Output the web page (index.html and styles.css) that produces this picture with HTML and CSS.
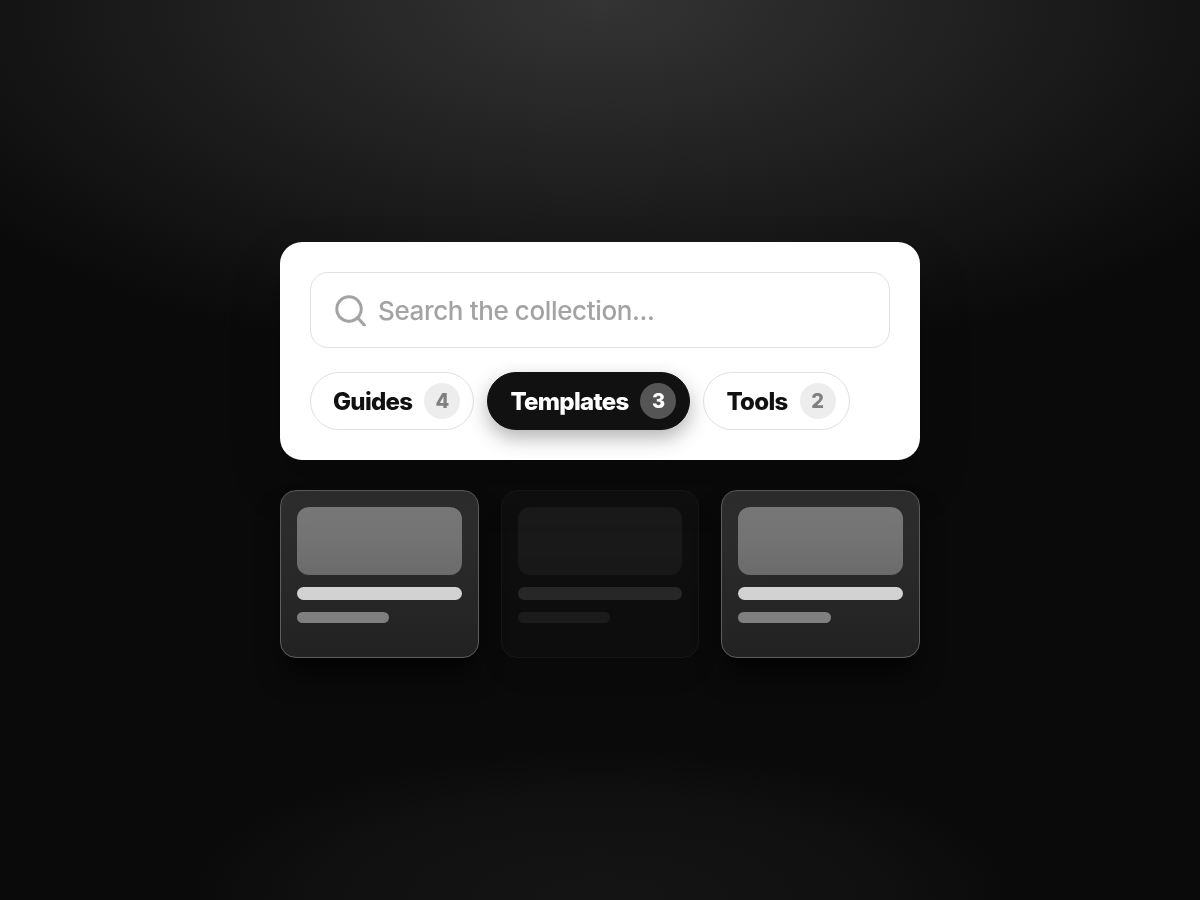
FILE: index.html
```html
<!DOCTYPE html>
<html lang="en">
<head>
<meta charset="utf-8">
<title>Search the collection</title>
<link rel="stylesheet" href="styles.css">
</head>
<body>
<main class="stack">
  <section class="panel">
    <div class="search">
      <svg class="search-icon" viewBox="0 0 32 32" fill="none" stroke="#a3a3a3" stroke-width="3" stroke-linecap="round"><circle cx="15" cy="15" r="12.2"/><path d="M23.5 23.5l7.5 8.5"/></svg>
      <span class="placeholder">Search the collection...</span>
    </div>
    <div class="chips">
      <div class="chip"><span>Guides</span><span class="badge">4</span></div>
      <div class="chip chip-active"><span>Templates</span><span class="badge">3</span></div>
      <div class="chip"><span>Tools</span><span class="badge">2</span></div>
    </div>
  </section>
  <section class="cards">
    <article class="card"><div class="thumb"></div><div class="line"></div><div class="line-short"></div></article>
    <article class="card card-dim"><div class="thumb"></div><div class="line"></div><div class="line-short"></div></article>
    <article class="card"><div class="thumb"></div><div class="line"></div><div class="line-short"></div></article>
  </section>
</main>
</body>
</html>
```
FILE: styles.css
```css
* { box-sizing: border-box; }
html, body { height: 100%; }
body {
  margin: 0;
  display: flex;
  align-items: center;
  justify-content: center;
  background:
    radial-gradient(ellipse 780px 370px at 50% 0, #343434 0%, rgba(10, 10, 10, 0) 100%),
    radial-gradient(ellipse 410px 150px at 50% 100%, #141414 0%, #101010 70%, rgba(10, 10, 10, 0) 100%),
    #0a0a0a;
  font-family: Inter, "Liberation Sans", sans-serif;
  overflow: hidden;
}
.stack { width: 640px; display: flex; flex-direction: column; gap: 30px; }
.panel {
  background: #fff;
  border-radius: 22px;
  padding: 30px;
  display: flex;
  flex-direction: column;
  gap: 24px;
  box-shadow: 0 24px 50px rgba(0, 0, 0, .22);
  will-change: transform;
}
.search {
  height: 76px;
  border: 1px solid #e0e0e0;
  border-radius: 18px;
  display: flex;
  align-items: center;
  gap: 12px;
  padding: 0 23px;
}
.search-icon { width: 32px; height: 32px; flex: none; }
.placeholder { font-size: 26px; font-weight: 500; color: #a3a3a3; letter-spacing: -.37px; }
.chips { display: flex; gap: 13px; }
.chip {
  height: 58px;
  border: 1px solid #e0e0e0;
  border-radius: 29px;
  padding: 0 13px 0 22px;
  display: flex;
  align-items: center;
  gap: 12px;
  font-size: 24px;
  font-weight: 800;
  letter-spacing: -.7px;
  color: #111;
}
.badge {
  width: 36px;
  height: 36px;
  border-radius: 50%;
  background: #ededed;
  color: #808080;
  font-size: 20px;
  letter-spacing: 0;
  display: flex;
  align-items: center;
  justify-content: center;
}
.chip-active {
  background: #111;
  border-color: #111;
  color: #fff;
  box-shadow: 0 8px 20px rgba(0, 0, 0, .3);
}
.chip-active .badge { background: #555; color: #fff; }
.cards { display: grid; grid-template-columns: repeat(3, 1fr); gap: 22px; }
.card {
  height: 168px;
  padding: 16px;
  border: 1px solid #5e5e5e;
  border-radius: 16px;
  background: linear-gradient(180deg, #2f2f2f, #222);
  box-shadow: 0 20px 28px -6px rgba(0, 0, 0, .7);
}
.card-dim { opacity: .15; }
.thumb { height: 68px; border-radius: 12px; background: linear-gradient(180deg, #7a7a7a, #6b6b6b); }
.line { height: 13px; margin-top: 12px; border-radius: 7px; background: #d2d2d2; }
.line-short { width: 56%; height: 11px; margin-top: 12px; border-radius: 6px; background: #7f7f7f; }
```
